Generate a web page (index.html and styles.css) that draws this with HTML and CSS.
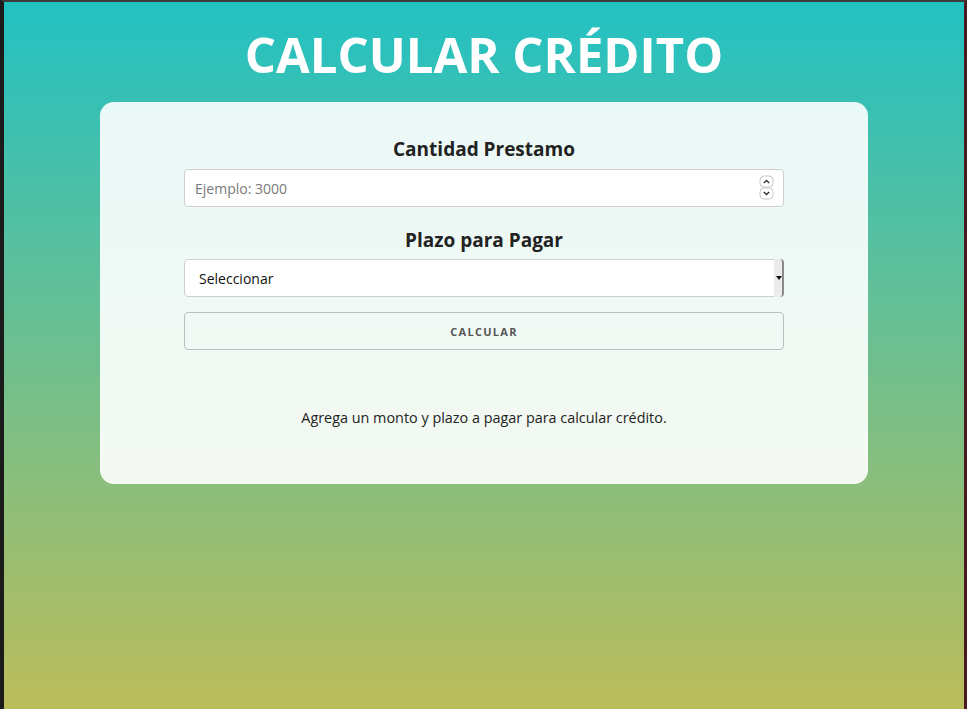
FILE: index.html
```html
<!DOCTYPE html>
<html lang="es">
<head>
<meta charset="utf-8">
<title>Calcular Crédito</title>
<link rel="stylesheet" href="styles.css">
</head>
<body>
<div class="frame">
  <main class="page">
    <h1 class="title">CALCULAR CRÉDITO</h1>
    <section class="card">
      <form class="form">
        <label class="label" for="cantidad">Cantidad Prestamo</label>
        <div class="field">
          <input class="input" id="cantidad" type="text" placeholder="Ejemplo: 3000">
          <span class="spin">
            <svg width="15" height="26" viewBox="0 0 15 26">
              <rect x="1" y="1" width="13" height="11" rx="4" fill="#fff" stroke="#c8c8c8"/>
              <rect x="1" y="13" width="13" height="11" rx="4" fill="#fff" stroke="#c8c8c8"/>
              <path d="M4.8 8 L7.5 5.4 L10.2 8" fill="none" stroke="#333" stroke-width="1.4"/>
              <path d="M4.8 17 L7.5 19.6 L10.2 17" fill="none" stroke="#333" stroke-width="1.4"/>
            </svg>
          </span>
        </div>
        <label class="label label-second" for="plazo">Plazo para Pagar</label>
        <div class="field">
          <select class="select" id="plazo">
            <option>Seleccionar</option>
          </select>
          <span class="select-arrow"><span class="tri"></span></span>
        </div>
        <button class="button" type="button">CALCULAR</button>
      </form>
      <p class="message">Agrega un monto y plazo a pagar para calcular crédito.</p>
    </section>
  </main>
</div>
</body>
</html>
```
FILE: styles.css
```css
html, body {
  margin: 0;
  padding: 0;
  height: 100%;
}
body {
  background: #1b1b1b;
  font-family: "Open Sans", "Noto Sans", sans-serif;
}
.frame {
  box-sizing: border-box;
  height: 709px;
  border-top: 2px solid #3c3c3c;
  border-left: 4px solid #1b1b1b;
  border-right: 3px solid #4a1a1f;
  overflow: hidden;
}
.page {
  height: 100%;
  background: linear-gradient(to bottom, #22c1c3 0, #fdbb2d 1010px);
  display: flex;
  flex-direction: column;
  align-items: center;
}
.title {
  margin: 20px 0 0;
  font-size: 49px;
  line-height: 64px;
  font-weight: 700;
  color: #fff;
  letter-spacing: 0;
}
.card {
  box-sizing: border-box;
  width: 768px;
  margin-top: 16px;
  padding: 35px 84px 56px;
  background: rgba(255, 255, 255, 0.9);
  border-radius: 14px;
}
.form {
  display: flex;
  flex-direction: column;
}
.label {
  text-align: center;
  font-size: 19px;
  line-height: 24px;
  font-weight: 700;
  color: #222;
  margin-bottom: 8px;
}
.label-second {
  margin-top: 21px;
  margin-bottom: 7px;
}
.field {
  position: relative;
}
.input, .select {
  box-sizing: border-box;
  width: 100%;
  height: 38px;
  border: 1px solid #cfcfcf;
  border-radius: 4px;
  background: #fff;
  font-family: inherit;
  font-size: 14px;
  outline: none;
  margin: 0;
}
.input {
  padding: 0 10px;
  color: #333;
}
.input::placeholder {
  color: #7a7a7a;
}
.spin {
  position: absolute;
  right: 10px;
  top: 6px;
  display: flex;
}
.select {
  -webkit-appearance: none;
  appearance: none;
  padding: 0 14px;
  color: #111;
}
.select-arrow {
  position: absolute;
  right: 0;
  top: 0;
  width: 10px;
  height: 38px;
  box-sizing: border-box;
  background: #ebebeb;
  border-right: 2px solid #8a8a8a;
  border-radius: 0 4px 4px 0;
  display: flex;
  align-items: center;
  justify-content: center;
}
.tri {
  width: 0;
  height: 0;
  border-left: 3px solid transparent;
  border-right: 3px solid transparent;
  border-top: 4px solid #111;
  margin-left: 1px;
}
.button {
  margin-top: 15px;
  height: 38px;
  border: 1px solid #bdbdbd;
  border-radius: 4px;
  background: transparent;
  font-family: inherit;
  font-size: 11px;
  font-weight: 700;
  letter-spacing: 1.3px;
  color: #555;
  padding: 0;
}
.message {
  margin: 58px 0 0;
  text-align: center;
  font-size: 14.4px;
  line-height: 20px;
  color: #222;
}
```
